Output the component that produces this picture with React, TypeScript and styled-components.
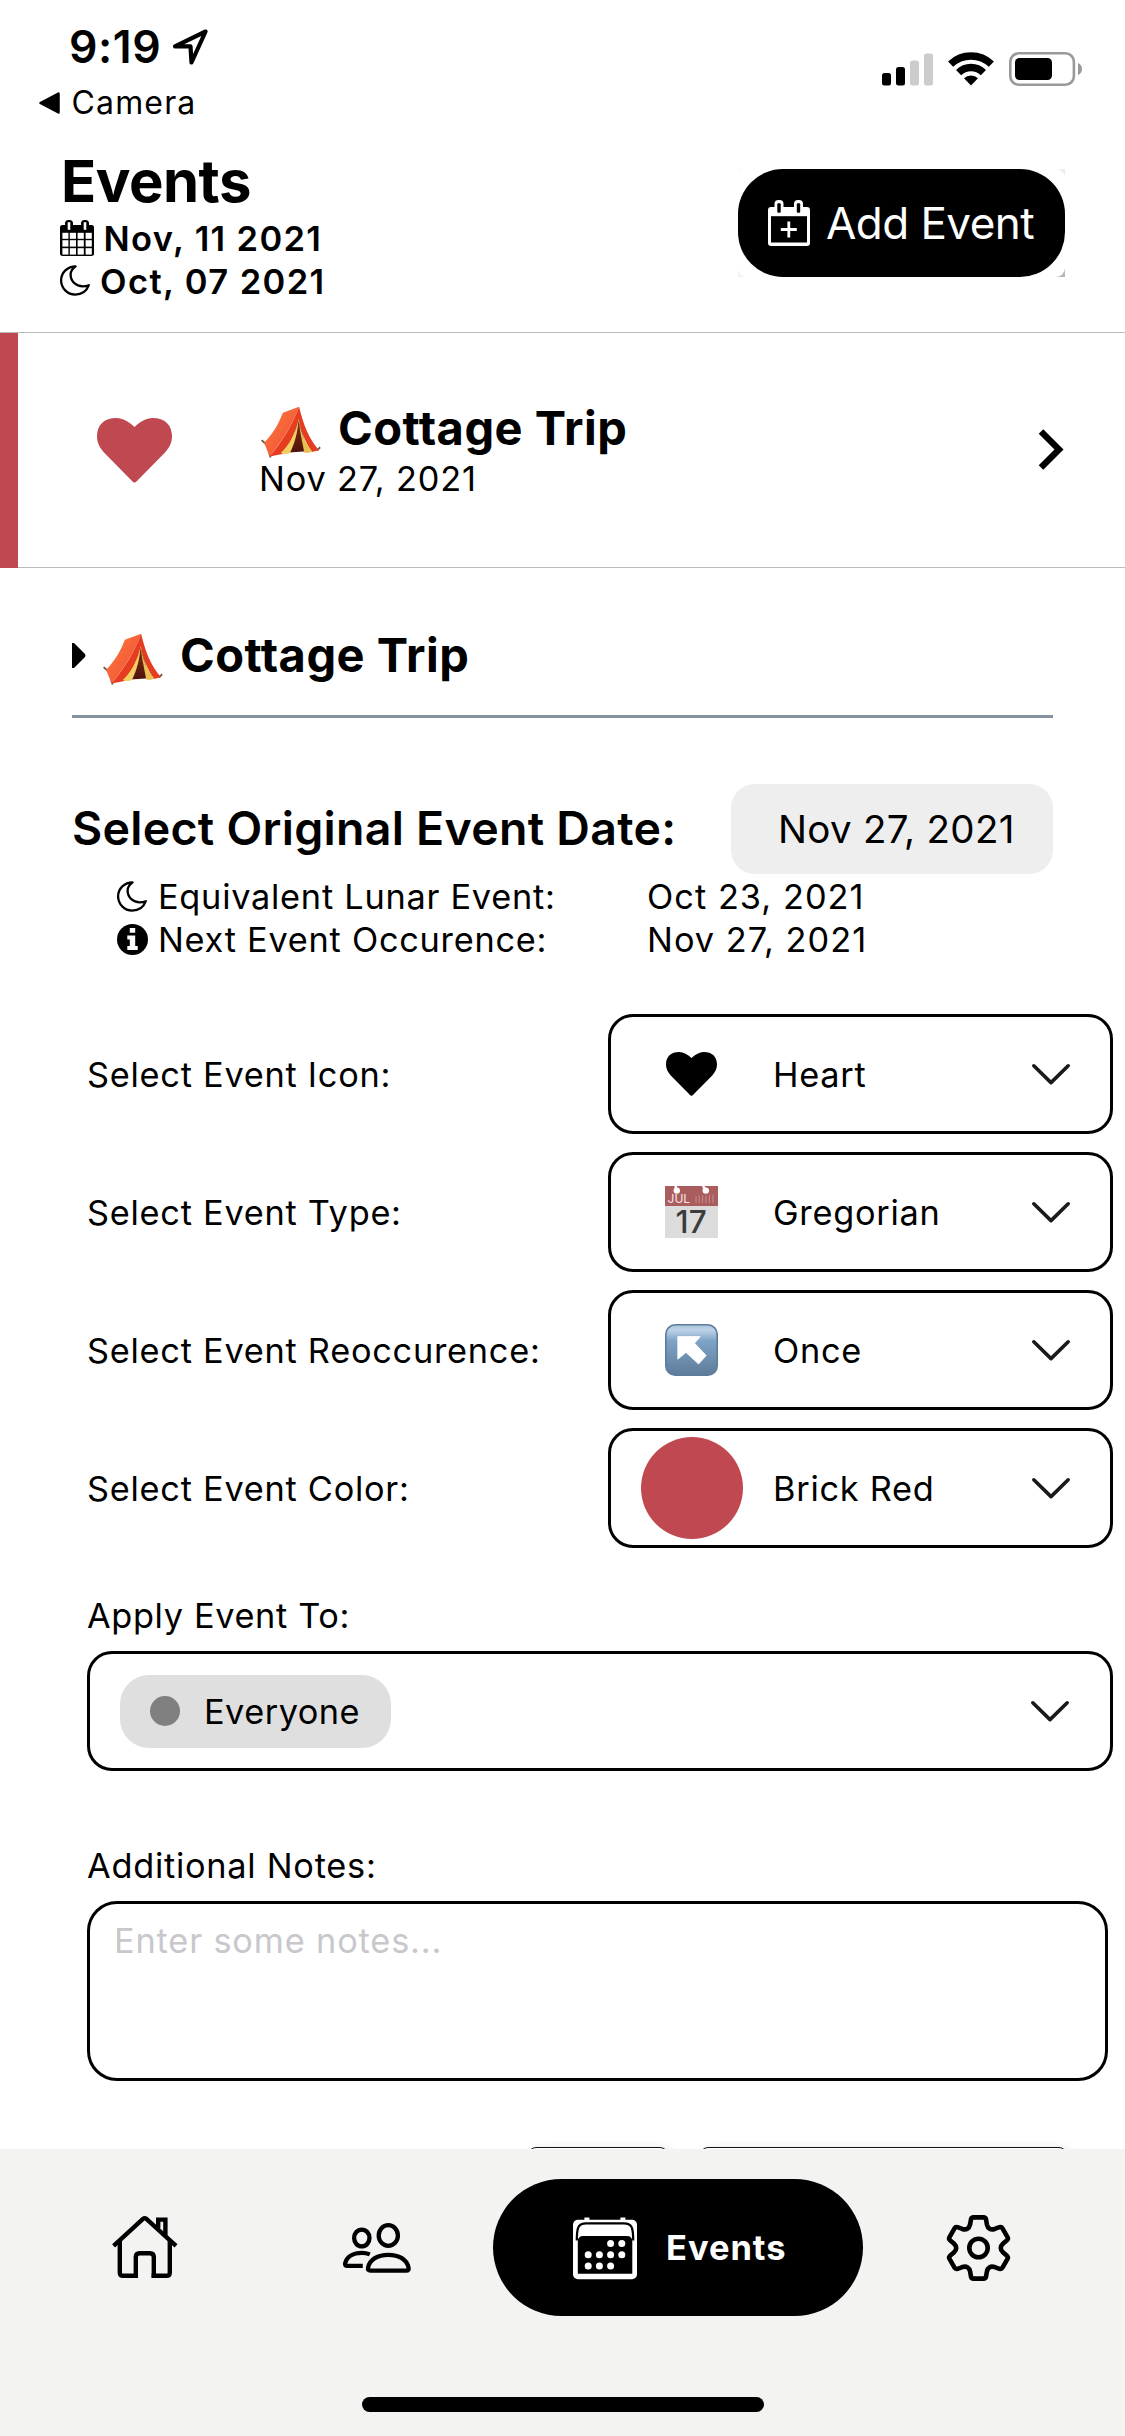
import React from "react";
import styled, { createGlobalStyle } from "styled-components";

const BRICK = "#c04851";

const GlobalStyle = createGlobalStyle`
  * { box-sizing: border-box; }
  body { margin: 0; background: #fff; }
`;

const Screen = styled.div`
  width: 1125px;
  height: 2436px;
  display: flex;
  flex-direction: column;
  overflow: hidden;
  background: #fff;
  color: #000;
  font-family: Inter, "Liberation Sans", sans-serif;
`;

const Label = styled.span<{ $size: number; $line: number; $weight?: number; $spacing?: number; $drop?: number }>`
  display: block;
  white-space: nowrap;
  font-size: ${(p) => p.$size}px;
  line-height: ${(p) => p.$line}px;
  font-weight: ${(p) => p.$weight ?? 400};
  letter-spacing: ${(p) => p.$spacing ?? 0}px;
  padding-top: ${(p) => p.$drop ?? 0}px;
`;

const Icon = styled.svg`
  display: block;
  flex: none;
  overflow: visible;
`;

/* ---------- status bar ---------- */

const StatusBar = styled.div`
  flex: none;
  display: flex;
  justify-content: space-between;
  height: 133px;
  padding: 22px 43px 0 39px;
`;

const ClockRow = styled.div`
  display: flex;
  align-items: center;
  gap: 12px;
  height: 50px;
  padding-left: 30px;
`;

const BackRow = styled.div`
  display: flex;
  align-items: center;
  gap: 11.5px;
  height: 61px;
`;

const StatusIcons = styled.div`
  display: flex;
  align-items: center;
  gap: 15px;
  height: 34px;
  margin-top: 30px;
`;

/* ---------- header ---------- */

const Header = styled.header`
  flex: none;
  display: flex;
  justify-content: space-between;
  height: 200px;
  padding: 13px 60px 0;
  border-bottom: 1px solid #bbb;
`;

const PageTitle = styled.div`
  padding-left: 1px;
`;

const DateLine = styled.div<{ $gap: number }>`
  display: flex;
  align-items: center;
  gap: ${(p) => p.$gap}px;
  height: 43.3px;
`;

const ButtonShade = styled.div`
  width: 327px;
  height: 108px;
  margin-top: 23px;
  background: linear-gradient(160deg, #fbfbfb 40%, #b4b4b4);
`;

const ButtonFrame = styled.div`
  height: 108px;
  border-radius: 9px;
  background: #fff;
`;

const AddButton = styled.button`
  display: flex;
  align-items: center;
  gap: 16px;
  width: 327px;
  height: 108px;
  padding: 0 0 0 30px;
  border: 0;
  border-radius: 45px;
  background: #000;
  color: #fff;
  font-family: inherit;
`;

/* ---------- event list row ---------- */

const EventRow = styled.section`
  flex: none;
  display: flex;
  height: 235px;
`;

const ColorBar = styled.div`
  width: 18px;
  background: ${BRICK};
`;

const EventBody = styled.div`
  flex: 1;
  display: flex;
  align-items: center;
  padding: 0 61px 0 79px;
  border-bottom: 1px solid #bbb;
`;

const EventText = styled.div`
  flex: 1;
  margin-left: 87px;
`;

const TitleLine = styled.div`
  display: flex;
  align-items: center;
  gap: 17px;
  height: 56px;
  padding-left: 2px;
`;

const TentSlot = styled.div`
  padding-top: 8px;
`;

/* ---------- details form ---------- */

const Details = styled.main`
  flex: none;
  display: flex;
  flex-direction: column;
  height: 1581px;
  overflow: hidden;
`;

const NameField = styled.div`
  flex: none;
  display: flex;
  align-items: center;
  gap: 17.5px;
  height: 150px;
  margin: 0 72px;
  padding-top: 27px;
  border-bottom: 3px solid #8593a1;
`;

const OriginalDate = styled.div`
  flex: none;
  display: flex;
  align-items: center;
  justify-content: space-between;
  height: 90px;
  margin: 66px 72px 0;
`;

const DateHeading = styled.div`
  padding-bottom: 2px;
`;

const DatePill = styled.div`
  width: 322px;
  height: 90px;
  padding: 0 0 0 47px;
  display: flex;
  align-items: center;
  border-radius: 24px;
  background: #eee;
`;

const InfoGrid = styled.div`
  flex: none;
  display: grid;
  grid-template-columns: 41px 489px 1fr;
  grid-auto-rows: 43px;
  align-items: center;
  margin: 1px 0 53px 117px;
`;

const FormRow = styled.div`
  flex: none;
  display: flex;
  align-items: center;
  justify-content: space-between;
  height: 120px;
  margin: 0 12px 18px 87px;
`;

const SelectBox = styled.div<{ $width: number }>`
  display: flex;
  align-items: center;
  flex: none;
  width: ${(p) => p.$width}px;
  height: 120px;
  padding: 0 40px 0 30px;
  border: 3px solid #000;
  border-radius: 25px;
`;

const OptionIcon = styled.div`
  display: flex;
  align-items: center;
  justify-content: center;
  width: 101px;
  height: 102px;
  margin-right: 31px;
`;

const ColorDot = styled.div`
  flex: none;
  width: 102px;
  height: 102px;
  border-radius: 50%;
  background: ${BRICK};
`;

const Grow = styled.div`
  flex: 1;
`;

const Field = styled.div<{ $top: number }>`
  flex: none;
  display: flex;
  flex-direction: column;
  gap: 13px;
  margin: ${(p) => p.$top}px 0 0 87px;
`;

const WideSelect = styled(SelectBox)`
  padding: 0 41px 0 30px;
`;

const Chip = styled.div`
  display: flex;
  align-items: center;
  gap: 24px;
  width: 271px;
  height: 73px;
  padding-left: 30px;
  border-radius: 29px;
  background: #dfdfdf;
`;

const ChipDot = styled.div`
  width: 30px;
  height: 30px;
  border-radius: 50%;
  background: #808080;
`;

const NotesBox = styled.div`
  width: 1021px;
  height: 180px;
  padding: 15px 24px;
  border: 3px solid #000;
  border-radius: 30px;
  color: #c7c7cc;
`;

const ActionRow = styled.div`
  flex: none;
  display: flex;
  justify-content: flex-end;
  gap: 32px;
  margin: 66px 58px 0 0;
`;

const ActionButton = styled.div<{ $width: number }>`
  width: ${(p) => p.$width}px;
  height: 90px;
  border: 1.5px solid #111;
  border-radius: 8px;
  box-shadow: 3px 3px 12px rgba(0, 0, 0, 0.16);
`;

/* ---------- tab bar ---------- */

const TabBar = styled.nav`
  flex: none;
  display: flex;
  flex-direction: column;
  align-items: center;
  height: 287px;
  background: #f3f3f1;
`;

const Tabs = styled.div`
  display: flex;
  align-items: center;
  width: 1125px;
  height: 137px;
  margin-top: 30px;
  padding-left: 112px;
`;

const ActiveTab = styled.div`
  display: flex;
  align-items: center;
  gap: 28px;
  width: 370px;
  height: 137px;
  margin: 0 83px 0 82px;
  padding-left: 79px;
  border-radius: 69px;
  background: #000;
  color: #fff;
`;

const HomeTab = styled.div`
  margin-right: 165px;
`;

const HomeIndicator = styled.div`
  width: 402px;
  height: 15px;
  margin-top: 81px;
  border-radius: 8px;
  background: #000;
`;

/* ---------- icons ---------- */

const LocationArrow = () => (
  <Icon width="35" height="36" viewBox="0 0 35 36">
    <path d="M32.6 2.5 L2 17.3 H17.5 L18.5 33.5 Z" fill="none" stroke="#000" strokeWidth="4.2" strokeLinejoin="round" />
  </Icon>
);

const BackTriangle = () => (
  <Icon width="21" height="22" viewBox="0 0 21 22">
    <path d="M1.5 11 L19.5 1.5 V20.5 Z" fill="#000" stroke="#000" strokeWidth="2.5" strokeLinejoin="round" />
  </Icon>
);

const Signal = () => (
  <Icon width="51" height="33" viewBox="0 0 51 33">
    <rect x="0" y="20" width="9" height="12.5" rx="2.5" />
    <rect x="14" y="14" width="9" height="18.5" rx="2.5" />
    <rect x="28" y="7.5" width="9" height="25" rx="2.5" fill="#ccc" />
    <rect x="42" y="0.5" width="9" height="32" rx="2.5" fill="#ccc" />
  </Icon>
);

const Wifi = () => (
  <Icon width="46" height="34" viewBox="0 0 46 34">
    <g fill="none" stroke="#000" strokeWidth="7.4">
      <path d="M2.6 12.2 A29.5 29.5 0 0 1 43.4 12.2" />
      <path d="M10.6 20.6 A17.8 17.8 0 0 1 35.4 20.6" />
    </g>
    <path d="M23 33.5 L16 26.3 A10 10 0 0 1 30 26.3 Z" />
  </Icon>
);

const Battery = () => (
  <Icon width="73" height="34" viewBox="0 0 73 34">
    <rect x="1.3" y="1.3" width="63.6" height="31.4" rx="8.5" fill="none" stroke="#999" strokeWidth="2.6" />
    <rect x="6" y="6" width="37" height="22" rx="4.5" />
    <path d="M69 11 C71.7 12.3 73 14.4 73 17 C73 19.6 71.7 21.7 69 23 Z" fill="#999" />
  </Icon>
);

const CalendarGrid = () => (
  <Icon width="34" height="36" viewBox="0 0 34 36">
    <rect x="0" y="5" width="34" height="31" rx="2.5" />
    <rect x="5" y="0" width="8" height="12" rx="3.5" />
    <rect x="21" y="0" width="8" height="12" rx="3.5" />
    <g fill="#fff">
      <rect x="7.7" y="2.2" width="2.6" height="7.6" />
      <rect x="23.7" y="2.2" width="2.6" height="7.6" />
      {[12.8, 20.2, 28.2].map((y, r) =>
        [2.4, 9.8, 17.6, 25.6].map((x) => (
          <rect key={`${x}-${y}`} x={x} y={y} width={x === 2.4 ? 6 : 6.2} height={r === 0 ? 6 : 6.4} />
        ))
      )}
    </g>
  </Icon>
);

const CalendarPlus = () => (
  <Icon width="42" height="46" viewBox="0 0 42 46">
    <rect x="0" y="7" width="42" height="39" rx="3" fill="#fff" />
    <rect x="6.5" y="0" width="9" height="13" rx="4" fill="#fff" />
    <rect x="26" y="0" width="9" height="13" rx="4" fill="#fff" />
    <rect x="9.3" y="3.3" width="3.4" height="9.5" rx="1" />
    <rect x="28.8" y="3.3" width="3.4" height="9.5" rx="1" />
    <rect x="3" y="16.2" width="36" height="26.3" />
    <path d="M20.8 21.5 V37.5 M12.8 29.5 H28.8" stroke="#fff" strokeWidth="2.8" />
  </Icon>
);

const Moon = () => (
  <Icon width="30" height="31" viewBox="0 0 30 31">
    <path
      d="M15.6 1.3 C7.6 1.3 1.1 7.6 1.1 15.3 C1.1 23.2 7.4 29.6 15.2 29.6 C21.4 29.6 26.6 26.2 28.8 20.2 C26.8 21 25 21.3 22.8 21.3 C15.8 21.3 10.6 16.2 10.6 9.6 C10.6 6.3 12.6 3.4 15.6 1.3 Z"
      fill="none"
      stroke="#000"
      strokeWidth="2.3"
      strokeLinejoin="round"
    />
  </Icon>
);

const Info = () => (
  <Icon width="31" height="31" viewBox="0 0 31 31">
    <circle cx="15.5" cy="15.5" r="15.5" />
    <path d="M12.8 4 h5.4 v4.8 h-5.4 z M10.3 11.5 h7.9 v10.6 h2.5 v4 H10.3 v-4 h2.5 v-6.6 h-2.5 z" fill="#fff" />
  </Icon>
);

const Heart = ({ width, color }: { width: number; color: string }) => (
  <Icon width={width} height={(width * 64.5) / 75} viewBox="0 0 75 64.5">
    <path
      d="M37.5 64.5 C36.5 64.5 35.8 63.8 35 63 L7 34.5 C3 30 0 25 0 18.5 C0 7 7 0 19.5 0 C26 0 31.5 3.5 37.5 9 C43.5 3.5 49 0 55.5 0 C68 0 75 7 75 18.5 C75 25 72 30 68 34.5 L40 63 C39.2 63.8 38.5 64.5 37.5 64.5 Z"
      fill={color}
    />
  </Icon>
);

const Tent = () => (
  <Icon width="60" height="52" viewBox="0 0 59 51" preserveAspectRatio="none">
    <defs>
      <linearGradient id="tentSide" x1="0" y1="0" x2="1" y2="1">
        <stop offset="0" stopColor="#ff7c45" />
        <stop offset="1" stopColor="#ee4a2c" />
      </linearGradient>
      <linearGradient id="tentDoor" x1="0" y1="0" x2="0" y2="1">
        <stop offset="0" stopColor="#8a2a10" />
        <stop offset="1" stopColor="#4d130c" />
      </linearGradient>
    </defs>
    <path d="M.6 33.5 L4.5 37 M8 46.5 L9.5 50.5 M55 43.5 L58.2 40.5" stroke="#6d5a45" strokeWidth="1.8" />
    <path d="M37.5 .8 L21.5 6.5 C17 18 11.5 27.5 3 36 L8.5 49.5 C19 36 30 21 37.5 .8 Z" fill="url(#tentSide)" />
    <path d="M37.5 .8 C30 21 19.5 36 8.5 49.5 L21 47 C28 38 34 27 37 13 C40 27 44 36 50 45 L57 43.5 C47 32 41.5 18 37.5 .8 Z" fill="#e63c20" />
    <path d="M37 14 L27 45.5 L46 44.5 Z" fill="url(#tentDoor)" />
    <path d="M36.8 14 C34 27 28 38 19.5 46 C22.5 47.4 26 47.2 28.5 46 C33 37 36 27 36.8 14 Z" fill="#f2cf62" />
    <path d="M37 14 C38.6 27 41 37 42.5 45.5 C45.5 46.4 48.5 45.8 50.5 44.6 C43.5 36.5 39.5 27 37 14 Z" fill="#e9bf52" />
  </Icon>
);

const ChevronRight = () => (
  <Icon width="26" height="42" viewBox="0 0 26 42">
    <path d="M3 2.5 L21 20.5 L3 38.5" fill="none" stroke="#000" strokeWidth="6.4" />
  </Icon>
);

const ChevronDown = () => (
  <Icon width="38" height="21" viewBox="0 0 38 21">
    <path d="M1.8 1.8 L19 18.6 L36.2 1.8" fill="none" stroke="#1a1a1a" strokeWidth="3.6" strokeLinecap="round" strokeLinejoin="round" />
  </Icon>
);

const Caret = () => (
  <Icon width="13" height="25" viewBox="0 0 13 25">
    <path d="M0 0 H2 L13 11 Q14 12.5 13 14 L2 25 H0 Z" />
  </Icon>
);

const CalendarEmoji = () => (
  <Icon width="53" height="52" viewBox="0 0 53 52">
    <rect width="53" height="52" fill="#dcdcdc" />
    <rect width="53" height="20" fill="#ab5c5d" />
    <path d="M10.5 0 L11.5 4 M38 0 L40.5 4" stroke="#fff" strokeWidth="2.5" />
    <circle cx="11.8" cy="4.6" r="3.2" fill="#fff" />
    <circle cx="40.8" cy="4.6" r="3.2" fill="#fff" />
    <path d="M31 10 V17 M34.3 9.5 V17 M37.6 9.5 V17 M41 9.5 V17 M44.4 9 V17 M48 8.5 V17" stroke="#c48788" strokeWidth="1.1" />
    <text x="2.6" y="17.2" fontSize="12" fill="#f6e6e6" fontFamily="Inter, sans-serif">JUL</text>
    <text x="10.6" y="46.6" fontSize="31.5" fontWeight="500" fill="#3c3c3c" fontFamily="Inter, sans-serif">17</text>
  </Icon>
);

const OnceEmoji = () => (
  <Icon width="53" height="52" viewBox="0 0 53 52">
    <defs>
      <linearGradient id="onceFill" x1="0" y1="0" x2="0" y2="1">
        <stop offset="0" stopColor="#a9c3dc" />
        <stop offset="0.1" stopColor="#bdd2e6" />
        <stop offset="0.32" stopColor="#7ea3c7" />
        <stop offset="1" stopColor="#5e7b98" />
      </linearGradient>
    </defs>
    <rect x=".8" y=".8" width="51.4" height="50.4" rx="9.5" fill="url(#onceFill)" stroke="#5d7c9b" strokeWidth="1.6" />
    <path d="M12.8 12.6 H35.2 L29.6 19.2 L41.2 31.6 L33.6 40 L21 28.4 L12.8 35.2 Z" fill="#fff" strokeLinejoin="round" stroke="#fff" strokeWidth=".8" />
  </Icon>
);

const HomeIcon = () => (
  <Icon width="66" height="63" viewBox="0 0 66 63">
    <g fill="none" stroke="#000" strokeWidth="4.4" strokeLinejoin="round">
      <path d="M1.6 29.8 L31 2.8 Q32.7 1.6 34.4 2.8 L64 29.8" />
      <path d="M7.8 25 V56.4 Q7.8 59.8 11.2 59.8 H26 M39.6 59.8 H54.4 Q57.8 59.8 57.8 56.4 V25" />
      <path d="M23.8 61.8 V41 Q23.8 37.2 27.6 37.2 H38 Q41.8 37.2 41.8 41 V61.8" />
      <path d="M46.2 12 V3.6 H53.4 V19" strokeLinejoin="miter" />
    </g>
  </Icon>
);

const PeopleIcon = () => (
  <Icon width="68" height="50" viewBox="0 0 68 50">
    <g fill="none" stroke="#000" strokeWidth="4.3" strokeLinejoin="round">
      <ellipse cx="45.3" cy="12.5" rx="9.6" ry="10.3" />
      <ellipse cx="18.8" cy="15" rx="7.7" ry="8.4" />
      <path d="M27.3 47.6 H63.4 Q66 47.6 65.6 44.8 C64 36.4 55.8 31.8 45.3 31.8 C34.8 31.8 26.6 36.4 25 44.8 Q24.6 47.6 27.3 47.6 Z" />
      <path d="M19.8 42.9 H4.2 Q1.7 42.9 2.1 40.4 C3.6 33.4 10.6 29.8 18.8 29.8 Q23.2 29.8 26.8 31.4" />
    </g>
  </Icon>
);

const EventsIcon = () => (
  <Icon width="66" height="66" viewBox="0 0 66 66">
    <rect x="1" y="4.7" width="64" height="59.5" rx="5" fill="#fff" />
    <path d="M12.4 5.5 V2.6 H17.4 V5.5 M48.4 5.5 V2.6 H53.4 V5.5" fill="#fff" />
    <path d="M4.8 25.5 C4.8 12 6.5 8.3 14 8.3 H52 C59.5 8.3 61.2 12 61.2 25.5" fill="none" stroke="#000" strokeWidth="2.2" />
    <path d="M5.8 58.8 V26.5 Q5.8 21 11.3 21 H54.8 Q60.3 21 60.3 26.5 V58.8 Z" />
    <g fill="#fff">
      {[
        [38.6, 28.4], [49.8, 28.4],
        [16.2, 39.8], [27.4, 39.8], [38.6, 39.8], [49.8, 39.8],
        [16.2, 51], [27.4, 51], [38.6, 51],
      ].map(([x, y]) => (
        <circle key={`${x}-${y}`} cx={x} cy={y} r="3.5" />
      ))}
    </g>
  </Icon>
);

const turn = (x: number, y: number, k: number) => {
  const a = (k * Math.PI) / 3;
  const c = Math.cos(a);
  const s = Math.sin(a);
  return `${(x * c - y * s).toFixed(2)} ${(x * s + y * c).toFixed(2)}`;
};

const gearPath =
  [0, 1, 2, 3, 4, 5]
    .map(
      (k) =>
        `${k === 0 ? "M" : "L"}${turn(-7.5, -28.6, k)} Q${turn(-7, -30.6, k)} ${turn(-5, -30.6, k)} ` +
        `L${turn(5, -30.6, k)} Q${turn(7, -30.6, k)} ${turn(7.5, -28.6, k)} ` +
        `L${turn(8.4, -23.6, k)} Q${turn(9.9, -17.2, k)} ${turn(-8.4, -23.6, k + 1)}`
    )
    .join(" ") + " Z";

const GearIcon = () => (
  <Icon width="65" height="66" viewBox="-32.5 -33 65 66">
    <g fill="none" stroke="#000" strokeWidth="4.6" strokeLinejoin="round">
      <path d={gearPath} />
      <circle r="9.2" />
    </g>
  </Icon>
);

/* ---------- screen ---------- */

const options = [
  { label: "Select Event Icon:", value: "Heart", icon: <Heart width={51} color="#000" /> },
  { label: "Select Event Type:", value: "Gregorian", icon: <CalendarEmoji /> },
  { label: "Select Event Reoccurence:", value: "Once", icon: <OnceEmoji /> },
  { label: "Select Event Color:", value: "Brick Red", icon: <ColorDot /> },
];

type BodyProps = { children: React.ReactNode; spacing?: number; line?: number; drop?: number };

const Body = ({ children, spacing = 0.75, line = 44, drop = 0 }: BodyProps) => (
  <Label $size={34.3} $line={line} $spacing={spacing} $drop={drop}>
    {children}
  </Label>
);

export default function App() {
  return (
    <>
      <GlobalStyle />
      <Screen>
        <StatusBar>
          <div>
            <ClockRow>
              <Label $size={44.5} $line={50} $weight={600} $spacing={0.6}>9:19</Label>
              <LocationArrow />
            </ClockRow>
            <BackRow>
              <BackTriangle />
              <Label $size={32} $line={44} $spacing={1.15}>Camera</Label>
            </BackRow>
          </div>
          <StatusIcons>
            <Signal />
            <Wifi />
            <Battery />
          </StatusIcons>
        </StatusBar>

        <Header>
          <div>
            <PageTitle>
              <Label $size={58} $line={70} $weight={700} $spacing={-0.5}>Events</Label>
            </PageTitle>
            <DateLine $gap={9.5}>
              <CalendarGrid />
              <Label $size={34.5} $line={43} $weight={600} $spacing={1.35} $drop={1}>Nov, 11 2021</Label>
            </DateLine>
            <DateLine $gap={10}>
              <Moon />
              <Label $size={34.5} $line={43} $weight={600} $spacing={1.4} $drop={1}>Oct, 07 2021</Label>
            </DateLine>
          </div>
          <ButtonShade>
            <ButtonFrame>
              <AddButton>
                <CalendarPlus />
                <Label $size={44} $line={60} $spacing={-0.55}>Add Event</Label>
              </AddButton>
            </ButtonFrame>
          </ButtonShade>
        </Header>

        <EventRow>
          <ColorBar />
          <EventBody>
            <Heart width={75} color={BRICK} />
            <EventText>
              <TitleLine>
                <TentSlot>
                  <Tent />
                </TentSlot>
                <Label $size={47} $line={56} $weight={700} $spacing={0.5}>Cottage Trip</Label>
              </TitleLine>
              <Body spacing={0.85} drop={1}>Nov 27, 2021</Body>
            </EventText>
            <ChevronRight />
          </EventBody>
        </EventRow>

        <Details>
          <NameField>
            <Caret />
            <TentSlot>
              <Tent />
            </TentSlot>
            <Label $size={47} $line={56} $weight={700} $spacing={0.5}>Cottage Trip</Label>
          </NameField>

          <OriginalDate>
            <DateHeading>
              <Label $size={46.5} $line={60} $weight={600} $spacing={0.27}>Select Original Event Date:</Label>
            </DateHeading>
            <DatePill>
              <Label $size={38.5} $line={60} $spacing={0.3}>Nov 27, 2021</Label>
            </DatePill>
          </OriginalDate>

          <InfoGrid>
            <Moon />
            <Body line={43}>Equivalent Lunar Event:</Body>
            <Body line={43} spacing={1.05}>Oct 23, 2021</Body>
            <Info />
            <Body line={43}>Next Event Occurence:</Body>
            <Body line={43} spacing={1.05}>Nov 27, 2021</Body>
          </InfoGrid>

          {options.map((o) => (
            <FormRow key={o.label}>
              <Body drop={2} spacing={0.75}>{o.label}</Body>
              <SelectBox $width={505}>
                <OptionIcon>{o.icon}</OptionIcon>
                <Body drop={1}>{o.value}</Body>
                <Grow />
                <ChevronDown />
              </SelectBox>
            </FormRow>
          ))}

          <Field $top={27}>
            <Body drop={1} spacing={0.65}>Apply Event To:</Body>
            <WideSelect $width={1026}>
              <Chip>
                <ChipDot />
                <Body spacing={0.5} drop={1}>Everyone</Body>
              </Chip>
              <Grow />
              <ChevronDown />
            </WideSelect>
          </Field>

          <Field $top={72}>
            <Body drop={1}>Additional Notes:</Body>
            <NotesBox>
              <Body spacing={0.85}>Enter some notes...</Body>
            </NotesBox>
          </Field>

          <ActionRow>
            <ActionButton $width={140} />
            <ActionButton $width={367} />
          </ActionRow>
        </Details>

        <TabBar>
          <Tabs>
            <HomeTab>
              <HomeIcon />
            </HomeTab>
            <PeopleIcon />
            <ActiveTab>
              <EventsIcon />
              <Label $size={34.5} $line={44} $weight={700} $spacing={0.95} $drop={1}>Events</Label>
            </ActiveTab>
            <GearIcon />
          </Tabs>
          <HomeIndicator />
        </TabBar>
      </Screen>
    </>
  );
}
